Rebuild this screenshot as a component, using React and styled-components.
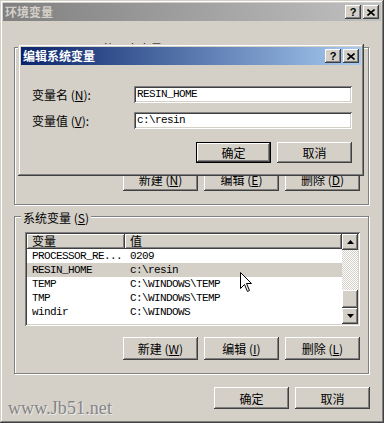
import React from 'react';
import styled, { createGlobalStyle, css } from 'styled-components';

const GlobalStyle = createGlobalStyle`
  html, body {
    margin: 0;
    padding: 0;
    background: #d4d0c8;
  }
  body {
    font-family: "Noto Sans CJK SC", "Liberation Sans", sans-serif;
    font-size: 12px;
    color: #000;
  }
`;

const raised = css`
  background: #d4d0c8;
  box-shadow: inset -1px -1px #404040, inset 1px 1px #fff,
    inset -2px -2px #808080, inset 2px 2px #d4d0c8;
`;

const sunken = css`
  box-shadow: inset 1px 1px #808080, inset -1px -1px #fff,
    inset 2px 2px #404040, inset -2px -2px #d4d0c8;
`;

const Window = styled.div`
  position: relative;
  width: 384px;
  height: 423px;
  box-sizing: border-box;
  padding: 3px;
  display: flex;
  flex-direction: column;
  ${raised};
  box-shadow: inset -1px -1px #404040, inset 1px 1px #d4d0c8,
    inset -2px -2px #808080, inset 2px 2px #fff;
`;

const TitleBar = styled.div`
  height: 18px;
  flex-shrink: 0;
  display: flex;
  align-items: center;
  justify-content: space-between;
  padding: 0 2px;
  background: ${p => (p.$active
    ? 'linear-gradient(to right, #0a246a, #a6caf0)'
    : 'linear-gradient(to right, #808080, #c0c0c0)')};
  color: ${p => (p.$active ? '#fff' : '#d4d0c8')};
`;

const TitleText = styled.span`
  font-weight: bold;
  font-size: 12px;
  line-height: 14px;
`;

const TitleButtons = styled.div`
  display: flex;
  gap: 2px;
`;

const CaptionButton = styled.div`
  width: 16px;
  height: 14px;
  box-sizing: border-box;
  display: flex;
  align-items: center;
  justify-content: center;
  font-family: "Liberation Sans", sans-serif;
  font-weight: bold;
  font-size: 11px;
  color: #000;
  ${raised};
`;

const Body = styled.div`
  flex: 1;
  display: flex;
  flex-direction: column;
  padding: 0 11px;
`;

const GroupBox = styled.div`
  position: relative;
  width: 355px;
  height: 158px;
  box-sizing: border-box;
  margin-top: ${p => p.$mt}px;
  border: 1px solid #808080;
  box-shadow: inset 1px 1px #fff, 1px 1px 0 #fff;
  padding: 15px 8px 0 10px;
  display: flex;
  flex-direction: column;
`;

const GroupLabel = styled.span`
  position: absolute;
  top: -6px;
  left: 6px;
  padding: 0 2px;
  line-height: 14px;
  background: #d4d0c8;
  white-space: pre;
`;

const ListView = styled.div`
  height: 94px;
  box-sizing: border-box;
  padding: 2px;
  background: #fff;
  display: flex;
  ${sunken};
`;

const ListMain = styled.div`
  flex: 1;
  display: flex;
  flex-direction: column;
`;

const HeaderRow = styled.div`
  display: flex;
  height: 15px;
`;

const HeaderCell = styled.div`
  box-sizing: border-box;
  width: ${p => (p.$w ? `${p.$w}px` : 'auto')};
  flex: ${p => (p.$w ? 'none' : '1')};
  padding-left: 5px;
  line-height: 14px;
  ${raised};
  box-shadow: inset -1px -1px #404040, inset 1px 1px #fff, inset -2px -2px #808080;
`;

const Row = styled.div`
  display: flex;
  height: 14px;
  background: ${p => (p.$selected ? '#d4d0c8' : 'transparent')};
  font-family: "Liberation Mono", monospace;
  font-size: 11px;
  letter-spacing: -0.6px;
  line-height: 14px;
`;

const Cell = styled.div`
  width: ${p => (p.$w ? `${p.$w}px` : 'auto')};
  flex: ${p => (p.$w ? 'none' : '1')};
  box-sizing: border-box;
  padding-left: 5px;
  white-space: pre;
`;

const ScrollBar = styled.div`
  width: 16px;
  display: flex;
  flex-direction: column;
`;

const ScrollButton = styled.div`
  width: 16px;
  height: ${p => p.$h || 16}px;
  box-sizing: border-box;
  display: flex;
  align-items: center;
  justify-content: center;
  ${raised};
`;

const ScrollTrack = styled.div`
  flex: 1;
  background-image: repeating-conic-gradient(#fff 0 25%, #d4d0c8 0 50%);
  background-size: 2px 2px;
`;

const ButtonRow = styled.div`
  display: flex;
  justify-content: flex-end;
  gap: 6px;
  margin-top: ${p => p.$mt || 0}px;
`;

const Button = styled.div`
  width: 75px;
  height: ${p => p.$h || 23}px;
  box-sizing: border-box;
  display: flex;
  align-items: center;
  justify-content: center;
  font-size: 12px;
  white-space: pre;
  ${raised};
  ${p => p.$default && css`
    box-shadow: inset 0 0 0 1px #000, inset -2px -2px #404040, inset 2px 2px #fff,
      inset -3px -3px #808080;
  `}
`;

const Dialog = styled.div`
  position: absolute;
  left: 18px;
  top: 44px;
  width: 346px;
  height: 132px;
  box-sizing: border-box;
  padding: 3px;
  display: flex;
  flex-direction: column;
  ${raised};
  box-shadow: inset -1px -1px #404040, inset 1px 1px #d4d0c8,
    inset -2px -2px #808080, inset 2px 2px #fff;
`;

const DialogBody = styled.div`
  padding: 21px 9px 0 11px;
  display: flex;
  flex-direction: column;
  gap: 9px;
`;

const FieldRow = styled.div`
  display: flex;
  align-items: center;
`;

const FieldLabel = styled.label`
  width: 102px;
  line-height: 14px;
  white-space: pre;
`;

const TextInput = styled.div`
  width: 218px;
  height: 17px;
  box-sizing: border-box;
  padding: 2px 3px;
  background: #fff;
  font-family: "Liberation Mono", monospace;
  font-size: 11px;
  letter-spacing: -0.6px;
  line-height: 13px;
  ${sunken};
`;

const Watermark = styled.div`
  position: absolute;
  left: 8px;
  top: 398px;
  font-family: "Liberation Serif", serif;
  font-size: 18px;
  color: #858585;
  text-shadow: 1px 1px 0 #ecebe8;
  letter-spacing: 0.1px;
`;

const Pointer = styled.svg`
  position: absolute;
  left: 240px;
  top: 272px;
`;

const Help = () => <CaptionButton>?</CaptionButton>;

const Close = () => (
  <CaptionButton>
    <svg width="8" height="7" viewBox="0 0 8 7">
      <path d="M0.5 0.5 L7.5 6.5 M7.5 0.5 L0.5 6.5" stroke="#000" strokeWidth="1.6" />
    </svg>
  </CaptionButton>
);

const Arrow = ({ up }) => (
  <svg width="7" height="4" viewBox="0 0 7 4">
    <path d={up ? 'M3.5 0 L7 4 L0 4 Z' : 'M0 0 L7 0 L3.5 4 Z'} fill="#000" />
  </svg>
);

const systemVars = [
  ['PROCESSOR_RE...', '0209'],
  ['RESIN_HOME', 'c:\\resin'],
  ['TEMP', 'C:\\WINDOWS\\TEMP'],
  ['TMP', 'C:\\WINDOWS\\TEMP'],
  ['windir', 'C:\\WINDOWS'],
];

// the user list sits under the edit dialog, so it is drawn without labels
const VarList = ({ rows, selected, labels = ['变量', '值'] }) => (
  <ListView>
    <ListMain>
      <HeaderRow>
        <HeaderCell $w={98}>{labels[0]}</HeaderCell>
        <HeaderCell>{labels[1]}</HeaderCell>
      </HeaderRow>
      {rows.map(([name, value]) => (
        <Row key={name} $selected={name === selected}>
          <Cell $w={98}>{name}</Cell>
          <Cell>{value}</Cell>
        </Row>
      ))}
    </ListMain>
    <ScrollBar>
      <ScrollButton><Arrow up /></ScrollButton>
      <ScrollTrack />
      <ScrollButton $h={18} />
      <ScrollButton><Arrow /></ScrollButton>
    </ScrollBar>
  </ListView>
);

const App = () => {
  return (
    <>
      <GlobalStyle />
      <Window>
        <TitleBar>
          <TitleText>环境变量</TitleText>
          <TitleButtons>
            <Help />
            <Close />
          </TitleButtons>
        </TitleBar>
        <Body>
          <GroupBox $mt={26}>
            <GroupLabel>Administrator 的用户变量 (<u>U</u>)</GroupLabel>
            <VarList rows={[]} labels={['', '']} />
            <ButtonRow $mt={11}>
              <Button>新建 (<u>N</u>)</Button>
              <Button>编辑 (<u>E</u>)</Button>
              <Button>删除 (<u>D</u>)</Button>
            </ButtonRow>
          </GroupBox>
          <GroupBox $mt={11}>
            <GroupLabel>系统变量 (<u>S</u>)</GroupLabel>
            <VarList rows={systemVars} selected="RESIN_HOME" />
            <ButtonRow $mt={11}>
              <Button>新建 (<u>W</u>)</Button>
              <Button>编辑 (<u>I</u>)</Button>
              <Button>删除 (<u>L</u>)</Button>
            </ButtonRow>
          </GroupBox>
          <ButtonRow $mt={13}>
            <Button $h={22}>确定</Button>
            <Button $h={22}>取消</Button>
          </ButtonRow>
        </Body>

        <Dialog>
          <TitleBar $active>
            <TitleText>编辑系统变量</TitleText>
            <TitleButtons>
              <Help />
              <Close />
            </TitleButtons>
          </TitleBar>
          <DialogBody>
            <FieldRow>
              <FieldLabel>变量名 (<u>N</u>):</FieldLabel>
              <TextInput>RESIN_HOME</TextInput>
            </FieldRow>
            <FieldRow>
              <FieldLabel>变量值 (<u>V</u>):</FieldLabel>
              <TextInput>c:\resin</TextInput>
            </FieldRow>
            <ButtonRow $mt={4}>
              <Button $h={21} $default>确定</Button>
              <Button $h={21}>取消</Button>
            </ButtonRow>
          </DialogBody>
        </Dialog>

        <Pointer width="13" height="20" viewBox="0 0 13 20">
          <path d="M0.5 0.5 L0.5 16.5 L4.5 12.5 L7.5 19.5 L9.5 18.5 L6.5 11.5 L11.5 11.5 Z"
            fill="#fff" stroke="#000" strokeWidth="1" />
        </Pointer>
        <Watermark>www.Jb51.net</Watermark>
      </Window>
    </>
  );
};

export default App;
